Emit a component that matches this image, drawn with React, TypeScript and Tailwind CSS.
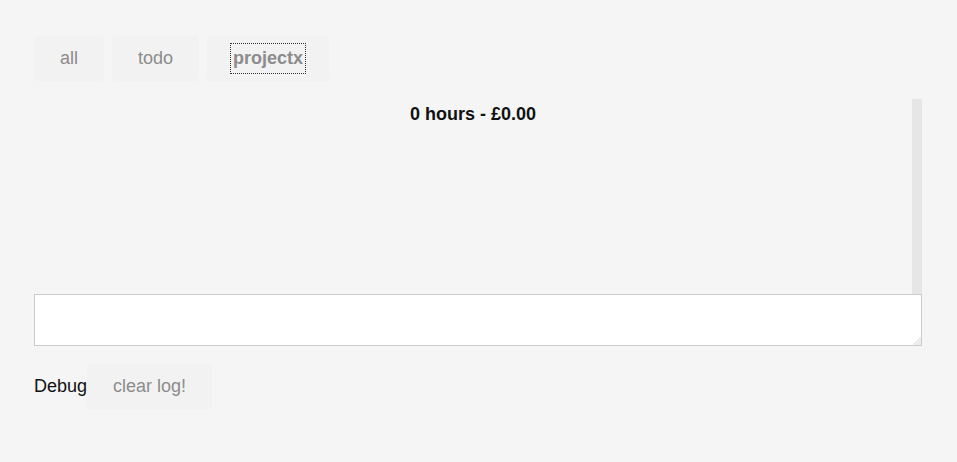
const button = "h-[45px] rounded-sm bg-[#f2f2f2] text-[#8c8c8c]";

function Tab({ label, active = false }: { label: string; active?: boolean }) {
  return (
    <button type="button" aria-pressed={active} className={`${button} ${active ? "px-[23px] font-bold" : "px-[26px]"}`}>
      <span className={active ? "block border border-dotted border-[#333] px-0.5 leading-[29px]" : ""}>{label}</span>
    </button>
  );
}

export default function App() {
  return (
    <main className="min-h-screen bg-[#f5f5f5] py-9 pr-[35px] pl-[34px] font-['Liberation_Sans',Arial,sans-serif] text-[18px] leading-[27px] text-[#111]">
      <nav className="flex gap-2">
        <Tab label="all" />
        <Tab label="todo" />
        <Tab label="projectx" active />
      </nav>
      <section className="mt-[18px] flex h-[195px]">
        <h1 className="flex-1 pt-0.5 text-center font-bold">0 hours - £0.00</h1>
        <div className="w-[10px] bg-[#e6e6e6]" />
      </section>
      <div className="relative">
        <textarea aria-label="New entry" className="block h-[52px] w-full resize-none border border-[#ccc] bg-white px-2" />
        <svg aria-hidden="true" viewBox="0 0 8 8" shapeRendering="crispEdges" className="pointer-events-none absolute right-px bottom-px size-2">
          <path d="M0 8V6H2V4H4V2H6V0H8V8Z" fill="#ececec" />
        </svg>
      </div>
      <div className="mt-[18px] flex items-center">
        <span>Debug</span>
        <button type="button" className={`${button} px-[26px]`}>clear log!</button>
      </div>
    </main>
  );
}
